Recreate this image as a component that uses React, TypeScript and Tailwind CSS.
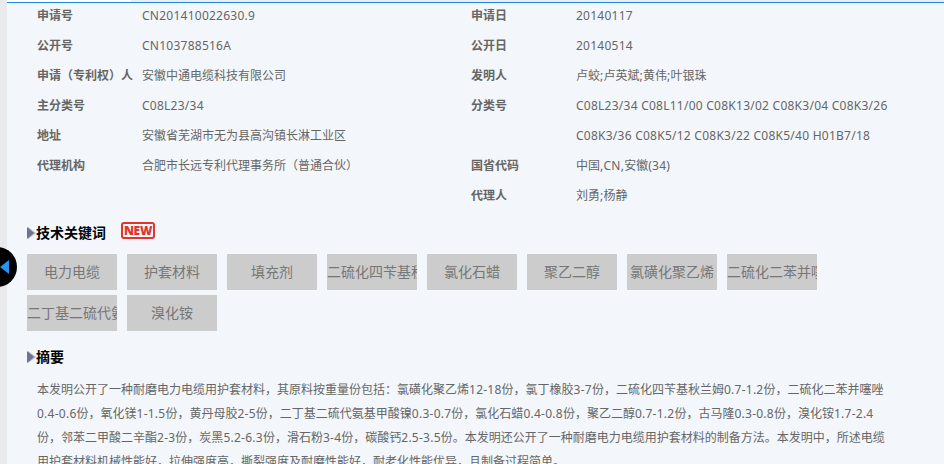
// App.tsx - Patent detail panel: bibliographic fields, keyword tags, abstract

const leftFields = [
  ["申请号", "CN201410022630.9"],
  ["公开号", "CN103788516A"],
  ["申请（专利权）人", "安徽中通电缆科技有限公司"],
  ["主分类号", "C08L23/34"],
  ["地址", "安徽省芜湖市无为县高沟镇长淋工业区"],
  ["代理机构", "合肥市长远专利代理事务所（普通合伙）"],
];

const rightFields = [
  ["申请日", "20140117"],
  ["公开日", "20140514"],
  ["发明人", "卢蛟;卢英斌;黄伟;叶银珠"],
  ["分类号", "C08L23/34 C08L11/00 C08K13/02 C08K3/04 C08K3/26"],
  ["", "C08K3/36 C08K5/12 C08K3/22 C08K5/40 H01B7/18"],
  ["国省代码", "中国,CN,安徽(34)"],
  ["代理人", "刘勇;杨静"],
];

const keywords = [
  "电力电缆",
  "护套材料",
  "填充剂",
  "二硫化四苄基秋兰姆",
  "氯化石蜡",
  "聚乙二醇",
  "氯磺化聚乙烯",
  "二硫化二苯并噻唑",
  "二丁基二硫代氨基甲酸镍",
  "溴化铵",
];

const abstractLines = [
  "本发明公开了一种耐磨电力电缆用护套材料，其原料按重量份包括：氯磺化聚乙烯12-18份，氯丁橡胶3-7份，二硫化四苄基秋兰姆0.7-1.2份，二硫化二苯并噻唑",
  "0.4-0.6份，氧化镁1-1.5份，黄丹母胶2-5份，二丁基二硫代氨基甲酸镍0.3-0.7份，氯化石蜡0.4-0.8份，聚乙二醇0.7-1.2份，古马隆0.3-0.8份，溴化铵1.7-2.4",
  "份，邻苯二甲酸二辛酯2-3份，炭黑5.2-6.3份，滑石粉3-4份，碳酸钙2.5-3.5份。本发明还公开了一种耐磨电力电缆用护套材料的制备方法。本发明中，所述电缆",
  "用护套材料机械性能好，拉伸强度高，撕裂强度及耐磨性能好，耐老化性能优异，且制备过程简单。",
];

// Latin runs sit a little wider in the original, CJK stays on its 12px grid
function Spaced({ text }: { text: string }) {
  return (
    <>
      {text.split(/([\x20-\x7e]+)/).map((part, i) =>
        i % 2 === 1 ? (
          <span key={i} className="tracking-[0.25px]">
            {part}
          </span>
        ) : (
          part
        ),
      )}
    </>
  );
}

function FieldRow({ label, value }: { label: string; value: string }) {
  return (
    <div className="flex h-[30px] items-center">
      <span className="w-[105px] shrink-0 font-bold text-[#666]">{label}</span>
      <span className="whitespace-nowrap text-[#666]">
        <Spaced text={value} />
      </span>
    </div>
  );
}

function SectionTitle({ children }: { children: React.ReactNode }) {
  return (
    <div className="flex items-center text-sm leading-5 font-bold text-black">
      <svg width="9" height="12" viewBox="0 0 9 12" className="shrink-0">
        <path d="M1 0 L9 6 L1 12 Z" fill="#b4b7cb" />
        <path d="M0 0 L7 6 L0 12 Z" fill="#6d7391" />
      </svg>
      {children}
    </div>
  );
}

export default function App() {
  return (
    <div className="relative flex h-[464px] w-[944px] overflow-hidden bg-[#e9eaee] text-xs [font-family:'Noto_Sans','Noto_Sans_CJK_SC',sans-serif]">
      {/* Collapse handle over the left edge */}
      <div className="absolute top-[247px] left-[-23px] z-10 h-10 w-10 rounded-full bg-black" />
      <svg width="9" height="14" viewBox="0 0 9 14" className="absolute top-[260px] left-0 z-10">
        <path d="M0 7 L9 0 L9 14 Z" fill="#2a93f0" />
      </svg>

      <main className="ml-[7px] flex-1 bg-[#f3f7fb]">
        <div className="flex h-[2px] bg-[#eeeef0]">
          <div className="w-[124px] bg-white" />
        </div>
        <div className="h-px bg-[#1e88e5]" />

        {/* Bibliographic fields */}
        <div className="-mt-[2px] flex pl-[30px]">
          <div className="w-[434px]">
            {leftFields.map(([label, value]) => (
              <FieldRow key={label} label={label} value={value} />
            ))}
          </div>
          <div>
            {rightFields.map(([label, value]) => (
              <FieldRow key={value} label={label} value={value} />
            ))}
          </div>
        </div>

        {/* Keywords */}
        <div className="mt-3 flex h-5 items-center pl-5">
          <SectionTitle>技术关键词</SectionTitle>
          <span className="mb-[5px] ml-[15px] flex h-[17px] w-[34px] items-center justify-center rounded-[3px] border-2 border-[#e0352b] text-[12px] font-black tracking-tight text-[#e0352b]">
            NEW
          </span>
        </div>
        <div className="mt-[11px] flex w-[810px] flex-wrap gap-x-[10px] gap-y-[5px] pl-5">
          {keywords.map((word) => (
            <div
              key={word}
              className="h-9 w-[90px] overflow-hidden bg-[#ccc] text-center text-sm leading-9 whitespace-nowrap text-[#777]"
            >
              {word}
            </div>
          ))}
        </div>

        {/* Abstract */}
        <div className="mt-4 pl-5">
          <SectionTitle>摘要</SectionTitle>
        </div>
        <div className="mt-[11px] pl-[30px] leading-6 whitespace-nowrap text-[#666]">
          {abstractLines.map((line) => (
            <p key={line}>
              <Spaced text={line} />
            </p>
          ))}
        </div>
      </main>
    </div>
  );
}
